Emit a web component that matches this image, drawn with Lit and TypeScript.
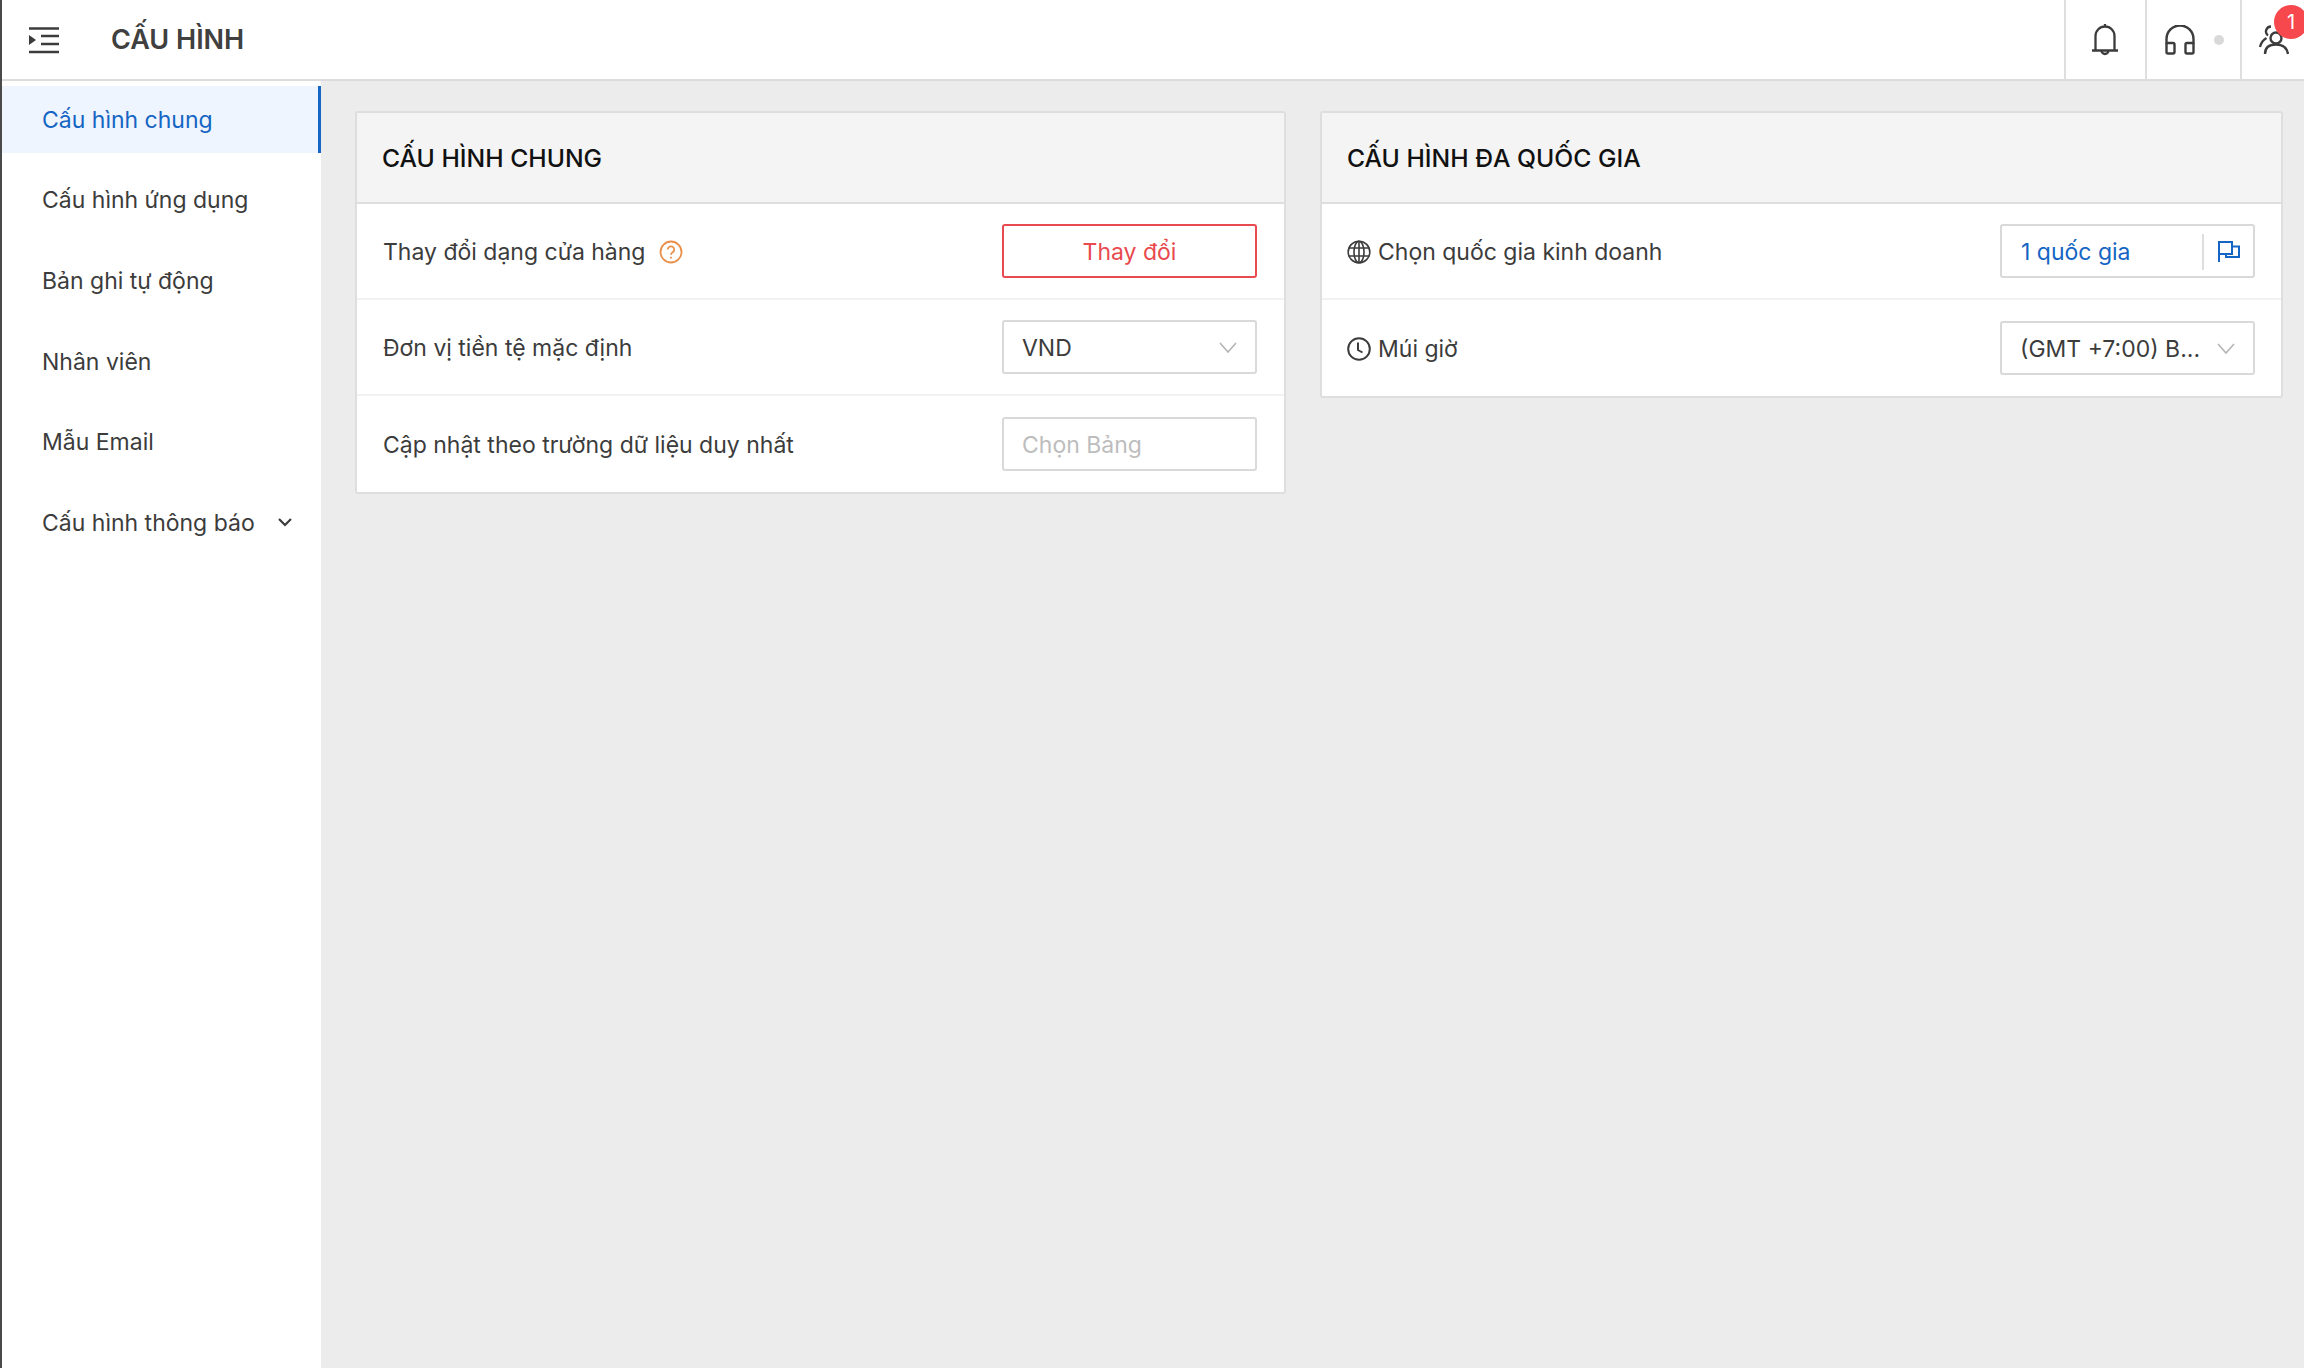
import { LitElement, html, css } from "lit";
import { customElement } from "lit/decorators.js";

const chevron = html`<svg class="chev" viewBox="0 0 18 12" width="18" height="12"><path d="M1 1l8 9 8-9" fill="none" stroke="#b5b5b5" stroke-width="1.6"/></svg>`;

@customElement("app-root")
export class AppRoot extends LitElement {
  static styles = css`
    :host { display: block; width: 2304px; height: 1368px; overflow: hidden; font-family: Inter, "Liberation Sans", sans-serif; font-size: 23px; color: #3c3c3c; background: #ececec; }
    * { box-sizing: border-box; }
    .page { display: flex; flex-direction: column; height: 100%; border-left: 2px solid #4a4a4a; }
    .top { flex: none; height: 81px; background: #fff; border-bottom: 2px solid #dcdcdc; display: flex; align-items: stretch; }
    .menu { width: 109px; display: flex; align-items: center; padding-left: 26px; flex: none; }
    .title { font-size: 27px; font-weight: 600; color: #404040; align-self: center; flex: 1; }
    .tool { border-left: 2px solid #dedede; display: flex; align-items: center; justify-content: center; position: relative; }
    .bell { width: 81px; padding-right: 2px; }
    .head { width: 95px; justify-content: flex-start; padding-left: 18px; gap: 19px; }
    .dot { width: 10px; height: 10px; border-radius: 50%; background: #d9d9d9; }
    .user { width: 64px; justify-content: flex-start; padding-left: 17px; }
    .badge { position: absolute; left: 32px; top: 5px; width: 34px; height: 34px; border-radius: 50%; background: #f7484e; color: #fff; font-size: 20px; display: flex; align-items: center; justify-content: center; }
    .body { flex: 1; display: flex; min-height: 0; }
    .side { width: 319px; flex: none; background: #fff; padding-top: 5px; }
    .item { height: 67px; margin-bottom: 13.7px; padding-left: 40px; display: flex; align-items: center; }
    .item.active { background: #eff5fe; color: #1565c4; border-right: 3px solid #1565c4; }
    .item svg { margin-left: 23px; }
    .main { flex: 1; display: grid; grid-template-columns: 931px 963px; column-gap: 34px; align-items: start; padding: 30px 0 0 34px; }
    .card { background: #fff; border: 2px solid #dedede; border-radius: 3px; }
    .card h2 { margin: 0; height: 91px; background: #f4f4f4; border-bottom: 2px solid #dedede; display: flex; align-items: center; padding-left: 25px; font-size: 24.7px; font-weight: 500; color: #111; }
    .row { height: 96px; display: flex; align-items: center; justify-content: space-between; padding: 0 27px 0 26px; border-bottom: 2px solid #f2f2f2; }
    .row:last-child { border-bottom: none; }
    .right .row { padding-right: 26px; }
    .label { display: flex; align-items: center; padding-top: 1px; }
    .label svg.lead { margin-right: 7px; margin-left: -1px; }
    .help { margin-left: 14px; }
    .ctl { width: 255px; height: 54px; border: 2px solid #d9d9d9; border-radius: 3px; display: flex; align-items: center; justify-content: space-between; padding: 1px 18px 0; }
    .ctl.danger { border-color: #e84a4f; color: #e84a4f; justify-content: center; }
    .ctl.ph { color: #bdbdbd; }
    .ctl.blue { color: #1565c4; padding-right: 0; padding-left: 19px; }
    .flag { height: 36px; width: 51px; border-left: 2px solid #dedede; display: flex; align-items: center; justify-content: center; flex: none; }
  `;

  render() {
    const stroke = "#3c3c3c";
    return html`<div class="page">
      <header class="top">
        <div class="menu">
          <svg width="32" height="28" viewBox="0 0 32 28"><path d="M1 2.500h30M13 10h18M13 18h18M1 26h30" stroke="${stroke}" stroke-width="2.400" fill="none"/><path d="M1 9l7 5-7 5z" fill="${stroke}"/></svg>
        </div>
        <div class="title">CẤU HÌNH</div>
        <div class="tool bell">
          <svg width="26" height="34" viewBox="0 0 26 34" fill="none" stroke="${stroke}" stroke-width="2.300"><path d="M3.500 27.500V13a9.500 9.500 0 0 1 19 0v14.500M0 27.500h26M13 1v3M9.500 27.500a3.500 3.500 0 0 0 7 0"/></svg>
        </div>
        <div class="tool head">
          <svg width="30" height="30" viewBox="0 0 30 30" fill="none" stroke="${stroke}" stroke-width="2.400"><path d="M1.500 19v-5a13.500 13.500 0 0 1 27 0v5"/><rect x="1.500" y="18" width="8" height="10.500" rx="1.500"/><rect x="20.500" y="18" width="8" height="10.500" rx="1.500"/></svg>
          <span class="dot"></span>
        </div>
        <div class="tool user">
          <svg width="30" height="30" viewBox="0 0 30 30" fill="none" stroke="${stroke}" stroke-width="2.400"><circle cx="17" cy="13" r="5.500"/><path d="M6 29c0-6 4-9.500 11-9.500S28 23 29 29"/><path d="M12 1.500a5 5 0 0 0-3 9M7.500 13C4 15 2 18 1 22"/></svg>
          <span class="badge">1</span>
        </div>
      </header>
      <div class="body">
        <nav class="side">
          <div class="item active">Cấu hình chung</div>
          <div class="item">Cấu hình ứng dụng</div>
          <div class="item">Bản ghi tự động</div>
          <div class="item">Nhân viên</div>
          <div class="item">Mẫu Email</div>
          <div class="item">Cấu hình thông báo
            <svg width="14" height="9" viewBox="0 0 14 9"><path d="M1 1l6 6 6-6" fill="none" stroke="#3c3c3c" stroke-width="2.200"/></svg>
          </div>
        </nav>
        <main class="main">
          <section class="card">
            <h2>CẤU HÌNH CHUNG</h2>
            <div class="row">
              <div class="label">Thay đổi dạng cửa hàng
                <svg class="help" width="24" height="24" viewBox="0 0 24 24" fill="none" stroke="#e88f4a" stroke-width="1.800"><circle cx="12" cy="12" r="10.500"/><path d="M8.800 9.500a3.200 3.200 0 1 1 4.800 2.800c-1 .6-1.600 1.200-1.600 2.400"/><path d="M12 16.800v1.600"/></svg>
              </div>
              <div class="ctl danger">Thay đổi</div>
            </div>
            <div class="row">
              <div class="label">Đơn vị tiền tệ mặc định</div>
              <div class="ctl">VND ${chevron}</div>
            </div>
            <div class="row">
              <div class="label">Cập nhật theo trường dữ liệu duy nhất</div>
              <div class="ctl ph">Chọn Bảng</div>
            </div>
          </section>
          <section class="card right">
            <h2>CẤU HÌNH ĐA QUỐC GIA</h2>
            <div class="row">
              <div class="label">
                <svg class="lead" width="24" height="24" viewBox="0 0 24 24" fill="none" stroke="#3c3c3c" stroke-width="1.600"><circle cx="12" cy="12" r="10.800"/><ellipse cx="12" cy="12" rx="5" ry="10.800"/><path d="M12 1v22M1.500 8h21M1.500 16h21"/></svg>
                Chọn quốc gia kinh doanh
              </div>
              <div class="ctl blue">1 quốc gia
                <span class="flag"><svg width="22" height="22" viewBox="0 0 22 22" fill="none" stroke="#1565c4" stroke-width="2"><path d="M1 21V1h13v12H1M14 5.500h7V16H8v-3"/></svg></span>
              </div>
            </div>
            <div class="row">
              <div class="label">
                <svg class="lead" width="24" height="24" viewBox="0 0 24 24" fill="none" stroke="#3c3c3c" stroke-width="2"><circle cx="12" cy="12" r="10.800"/><path d="M11 5.500V13l4.500 2.500"/></svg>
                Múi giờ
              </div>
              <div class="ctl">(GMT +7:00) B... ${chevron}</div>
            </div>
          </section>
        </main>
      </div>
    </div>`;
  }
}
